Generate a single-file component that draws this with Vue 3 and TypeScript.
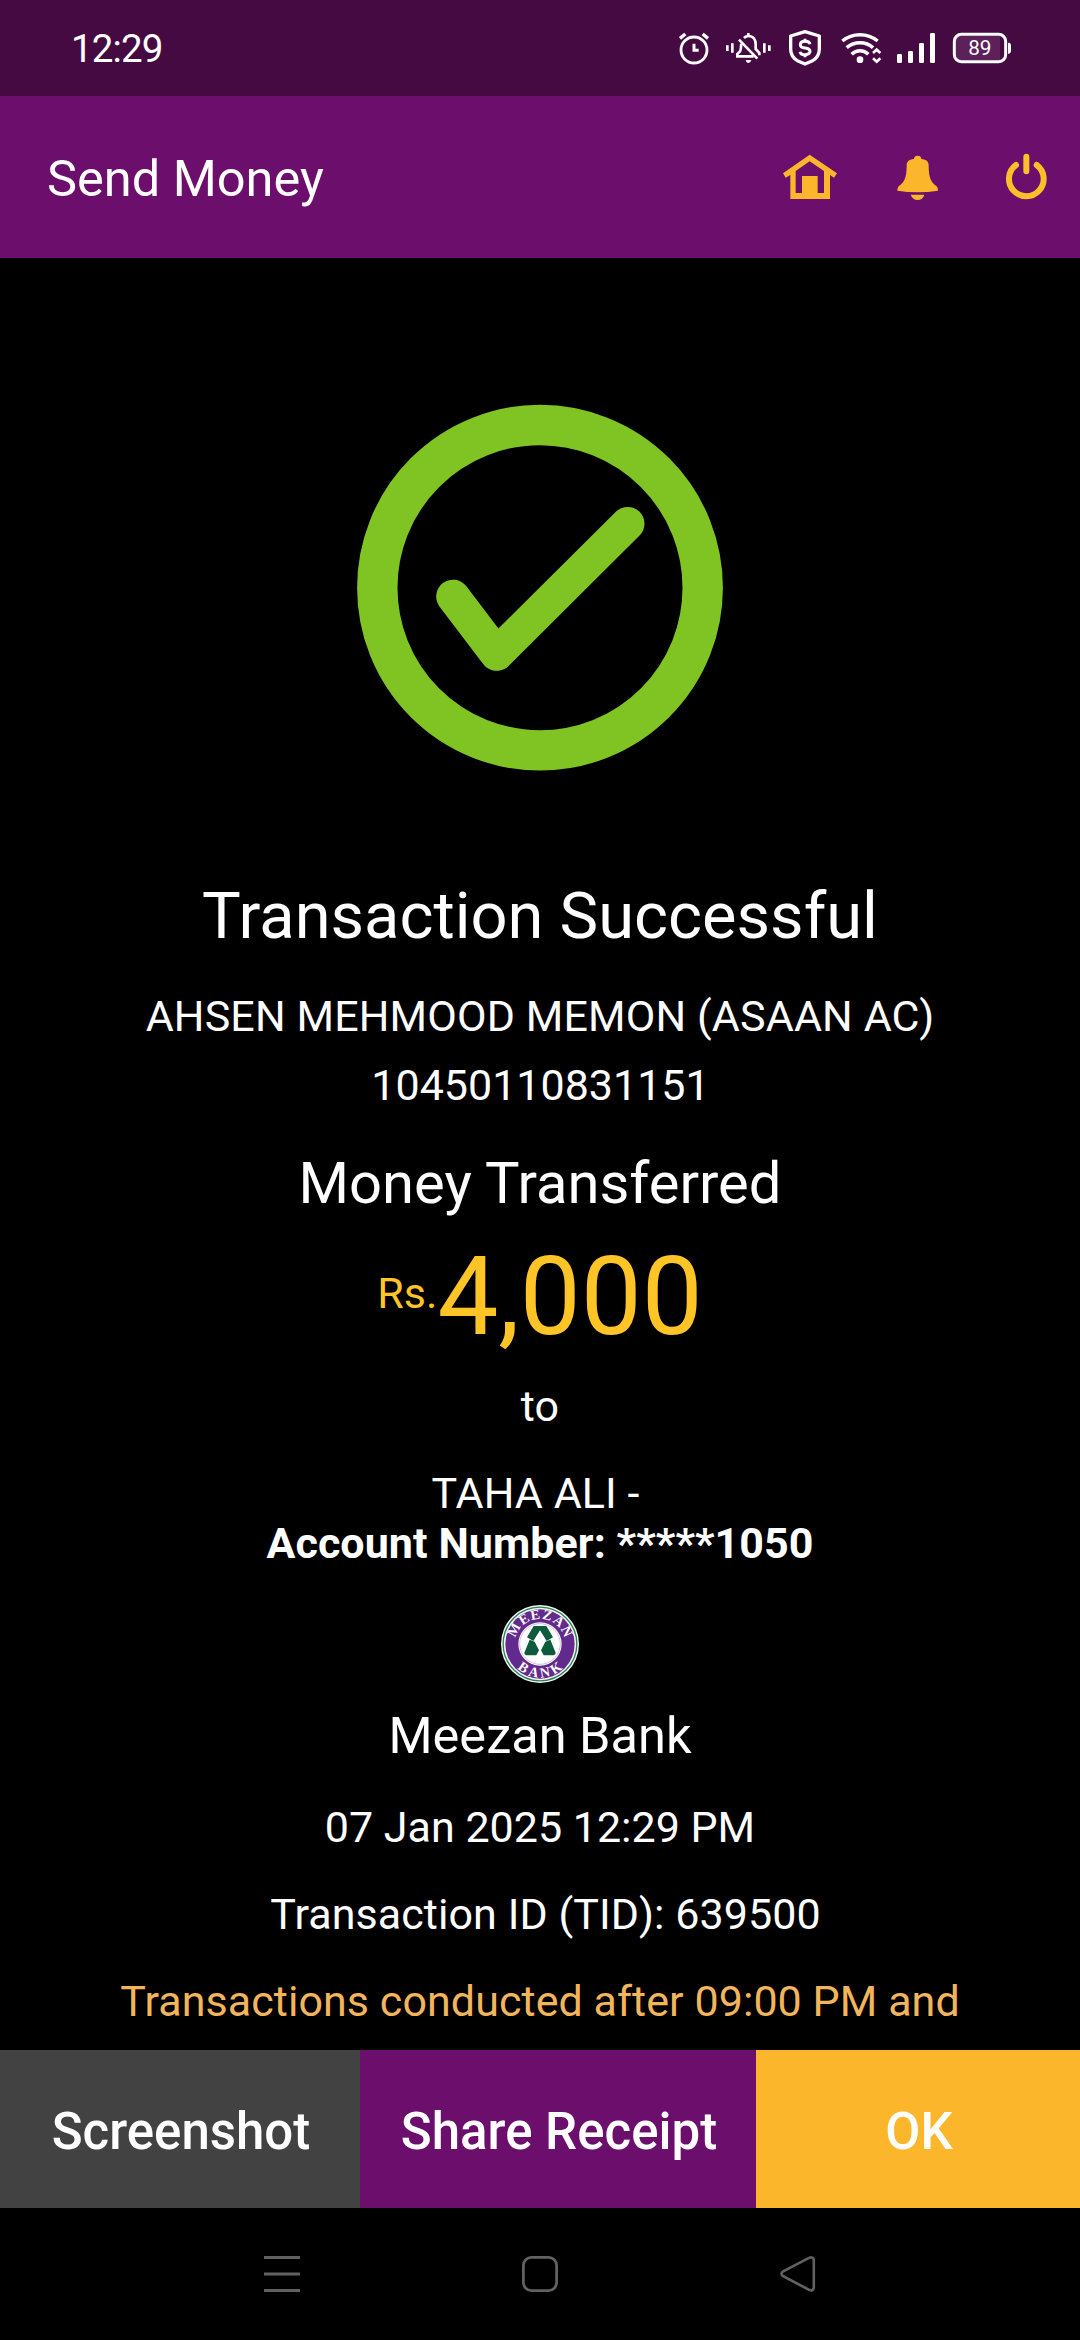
<script setup lang="ts">
interface Action {
  label: string
  tone: 'grey' | 'purple' | 'gold'
}

const receipt = {
  sender: 'AHSEN MEHMOOD MEMON (ASAAN AC)',
  senderAccount: '10450110831151',
  currency: 'Rs.',
  amount: '4,000',
  beneficiary: 'TAHA ALI -',
  beneficiaryAccount: 'Account Number: *****1050',
  bank: 'Meezan Bank',
  date: '07 Jan 2025 12:29 PM',
  tid: 'Transaction ID (TID): 639500',
  note: 'Transactions conducted after 09:00 PM and',
}

const actions: Action[] = [
  { label: 'Screenshot', tone: 'grey' },
  { label: 'Share Receipt', tone: 'purple' },
  { label: 'OK', tone: 'gold' },
]
</script>

<template>
  <div class="screen">
    <div class="status">
      <span class="clock">12:29</span>
      <div class="status-icons">
        <!-- alarm -->
        <svg width="30" height="37" viewBox="54 57 90 111" fill="none" stroke="#fff">
          <circle cx="102" cy="120" r="39" stroke-width="8.500" />
          <path d="M60 85L76 72M144 85L128 72" stroke-width="10" />
          <path d="M102 101v20h14" stroke-width="9" />
        </svg>
        <!-- muted bell with vibration -->
        <svg width="48" height="37" viewBox="192 57 144 111" fill="none" stroke="#fff" stroke-width="8">
          <path d="M202 106v17M217 100v28M313 100v28M328 106v17" />
          <path d="M252 84Q258 78 265 78C281 78 287 90 287 103V117L298 129V136" />
          <path d="M244 101C242 110 244 119 240 124L232 132V139H281" />
          <path d="M237 89L292 146" />
          <path d="M265 69v10" stroke-width="8" />
          <path d="M257 150h17q-2 9-8.500 9t-8.500-9z" fill="#fff" stroke="none" />
        </svg>
        <!-- shield -->
        <svg width="36" height="37" viewBox="384 57 108 111" fill="none" stroke="#fff" stroke-width="10" stroke-linejoin="round">
          <path d="M435 65L478 78V118C478 136 470 146 456 153L435 162L414 153C400 146 392 136 392 118V78Z" />
          <path d="M450 103C449 96 444 94 435 94C426 94 421 98 421 104C421 111 427 113 435 114C444 115 450 118 450 124C450 130 444 134 435 134C426 134 421 131 420 125M435 86v8M435 134v8" stroke-width="9" />
        </svg>
        <!-- wifi -->
        <svg width="40" height="37" viewBox="0 57 120 111" fill="none" stroke="#fff" stroke-width="10.500">
          <path d="M7 93Q30 74 60 74T113 93" />
          <path d="M20 113Q37 98 60 98Q83 98 99 113" />
          <path d="M35 133Q46 122 60 122Q74 122 85 133" />
          <circle cx="60" cy="149" r="10" fill="#fff" stroke="none" />
          <path d="M99 129L110 119L121 129M99 145L110 155L121 145" stroke-width="8" />
        </svg>
        <!-- signal -->
        <svg width="40" height="37" viewBox="168 57 120 111" fill="#fff">
          <rect x="171" y="132" width="15" height="27" rx="4" />
          <rect x="204" y="123" width="15" height="36" rx="4" />
          <rect x="237" y="99" width="15" height="60" rx="4" />
          <rect x="270" y="69" width="15" height="90" rx="4" />
        </svg>
        <!-- battery -->
        <svg width="60" height="37" viewBox="336 57 180 111">
          <rect x="348" y="78" width="132" height="72" fill="#5c2159" />
          <rect x="343" y="73" width="154" height="82" rx="21" fill="none" stroke="#fff" stroke-width="9" />
          <path d="M504 98h3q6 1 6 8v17q0 7-6 8h-3z" fill="#fff" />
          <text x="419.500" y="135" text-anchor="middle" class="battery-level">89</text>
        </svg>
      </div>
    </div>

    <header class="appbar">
      <h1>Send Money</h1>
      <div class="appbar-icons">
        <!-- home -->
        <svg width="54" height="50" viewBox="69 66 162 150" fill="#fcb62b">
          <path fill-rule="evenodd" d="M149 74L231 130L222 143L210 135V207H91V135L77 143L69 130ZM149 94L107 123V189H126V138H173V189H192V123Z" />
        </svg>
        <!-- notifications -->
        <svg width="47" height="50" viewBox="402 66 141 150" fill="#fcb62b">
          <path d="M462 87C462 80 467 77 473 77S484 80 484 87C500 88 506 96 506 107C506 146 515 157 529 168C533 172 534 177 534 182Q504 187 473 187T412 182C412 177 413 172 417 168C431 157 440 146 440 107C440 96 446 88 462 87Z" />
          <path d="M452 194H493Q488 210 473 210T452 194Z" />
        </svg>
        <!-- power -->
        <svg width="57" height="50" viewBox="714 66 171 150" fill="none" stroke="#fdbf27" stroke-width="18" stroke-linecap="round">
          <path d="M768 105A52 52 0 1 0 830 105M799 80V124" />
        </svg>
      </div>
    </header>

    <main class="receipt">
      <svg class="tick" width="366" height="366" viewBox="0 0 366 366" fill="none" stroke="#80c424">
        <circle cx="183" cy="182.700" r="162.700" stroke-width="40.400" />
        <path d="M96 191.500L139.700 249L270.700 118.700" stroke-width="33.600" stroke-linecap="round" stroke-linejoin="round" />
      </svg>
      <h2 class="title">Transaction Successful</h2>
      <p class="line sender">{{ receipt.sender }}</p>
      <p class="line sender-account">{{ receipt.senderAccount }}</p>
      <p class="transferred">Money Transferred</p>
      <p class="amount"><span class="currency">{{ receipt.currency }}</span>{{ receipt.amount }}</p>
      <p class="line to">to</p>
      <p class="line beneficiary">{{ receipt.beneficiary }}</p>
      <p class="line account">{{ receipt.beneficiaryAccount }}</p>
      <svg class="logo" width="78" height="78" viewBox="0 0 234 234">
        <defs>
          <path id="arc-top" d="M42 117A75 75 0 0 1 192 117" />
          <path id="arc-bottom" d="M17 117A100 100 0 0 0 217 117" />
        </defs>
        <circle cx="117" cy="117" r="117" fill="#f1f5f1" />
        <circle cx="117" cy="117" r="110.500" fill="none" stroke="#2c7f58" stroke-width="4" />
        <circle cx="117" cy="117" r="104" fill="#622a8c" />
        <circle cx="117" cy="117" r="65" fill="#fff" />
        <circle cx="117" cy="117" r="61" fill="none" stroke="#b7a3c9" stroke-width="2" />
        <g fill="#0e5a3c">
          <path d="M98 63H136L156 97L137 108L117 76L97 108L78 97Z" />
          <path d="M86 104L101 110L114 136L106 151H76Q70 149 70 143Z" />
          <path d="M148 104L133 110L120 136L128 151H158Q164 149 164 143Z" />
        </g>
        <text class="logo-text"><textPath href="#arc-top" startOffset="50%" text-anchor="middle" textLength="200">MEEZAN</textPath></text>
        <text class="logo-text"><textPath href="#arc-bottom" startOffset="50%" text-anchor="middle" textLength="150">BANK</textPath></text>
      </svg>
      <p class="bank">{{ receipt.bank }}</p>
      <p class="line date">{{ receipt.date }}</p>
      <p class="line tid">{{ receipt.tid }}</p>
      <p class="line note">{{ receipt.note }}</p>
    </main>

    <div class="actions">
      <button v-for="a in actions" :key="a.label" type="button" :class="a.tone">{{ a.label }}</button>
    </div>

    <nav class="navbar">
      <svg width="36" height="36" viewBox="0 0 36 36" stroke="#616161" stroke-width="3">
        <path d="M0 1.500H36M0 18H36M0 34.500H36" />
      </svg>
      <svg width="36" height="36" viewBox="0 0 36 36" fill="none" stroke="#616161" stroke-width="2.800">
        <rect x="1.400" y="1.400" width="33.200" height="33.200" rx="8" />
      </svg>
      <svg width="36" height="36" viewBox="0 0 36 36" fill="none" stroke="#616161" stroke-width="2.600">
        <path d="M2.700 15.700L29 1.900Q33.300 0.200 33.800 4V31.500Q33.300 35.800 29 33.800L2.700 19.900Q0.300 17.800 2.700 15.700Z" />
      </svg>
    </nav>
  </div>
</template>

<style>
body {
  margin: 0;
  background: #000;
}
</style>

<style scoped>
.screen {
  width: 1080px;
  height: 2340px;
  display: flex;
  flex-direction: column;
  overflow: hidden;
  background: #000;
  color: #fff;
  font-family: Roboto, "Liberation Sans", sans-serif;
}
h1, h2, p {
  margin: 0;
  font-weight: 400;
  white-space: pre;
}
svg {
  display: block;
  flex: none;
  overflow: visible;
}
.status {
  height: 96px;
  flex: none;
  display: flex;
  justify-content: space-between;
  align-items: flex-start;
  box-sizing: border-box;
  padding: 0 68px 0 71px;
  background: #450a42;
}
.clock {
  font-size: 38.5px;
  line-height: 97px;
  letter-spacing: -0.9px;
}
.status-icons {
  display: flex;
  gap: 16px;
  padding-top: 29px;
}
.battery-level {
  font-size: 62px;
  fill: #fff;
}
.appbar {
  height: 162px;
  flex: none;
  display: flex;
  justify-content: space-between;
  align-items: center;
  box-sizing: border-box;
  padding: 0 25px 0 47px;
  background: #6c0f6c;
}
.appbar h1 {
  font-size: 50.5px;
  line-height: 60px;
  padding-top: 4px;
}
.appbar-icons {
  display: flex;
  gap: 57px;
}
.receipt {
  height: 1792px;
  flex: none;
  display: flex;
  flex-direction: column;
  align-items: center;
  overflow: hidden;
}
.receipt > * {
  flex: none;
}
.tick {
  margin-top: 147px;
}
.title {
  margin-top: 106px;
  font-size: 65px;
  line-height: 78px;
}
.line {
  font-size: 43px;
  line-height: 50px;
  letter-spacing: 0.07px;
}
.sender {
  margin-top: 36px;
  letter-spacing: 0.13px;
}
.sender-account {
  margin-top: 19px;
  padding-left: 1px;
  letter-spacing: 0;
}
.transferred {
  margin-top: 39px;
  font-size: 57.9px;
  line-height: 68px;
}
.amount {
  display: flex;
  margin-top: 16px;
  font-size: 108.5px;
  line-height: 128px;
  color: #ffc425;
}
.currency {
  font-size: 43px;
  line-height: 120px;
}
.to {
  margin-top: 20px;
}
.beneficiary {
  margin-top: 37px;
  padding-right: 9px;
}
.account {
  font-weight: 700;
}
.logo {
  margin-top: 37px;
}
.logo-text {
  font-family: "Liberation Serif", serif;
  font-weight: 700;
  font-size: 42px;
  fill: #fff;
}
.bank {
  margin-top: 23px;
  font-size: 50.5px;
  line-height: 60px;
}
.date {
  margin-top: 36px;
  letter-spacing: 0;
}
.tid {
  margin-top: 37px;
  padding-left: 11px;
}
.note {
  margin-top: 37px;
  color: #f2b55c;
}
.actions {
  height: 158px;
  flex: none;
  display: grid;
  grid-template-columns: 360px 396px 324px;
}
.actions button {
  border: 0;
  padding: 5px 0 0 2px;
  color: #fff;
  font: 500 51px Roboto, "Liberation Sans", sans-serif;
}
.grey {
  background: #424242;
}
.purple {
  background: #6c0f6c;
}
.gold {
  background: #fcb62b;
}
.navbar {
  flex: 1;
  display: flex;
  justify-content: space-between;
  align-items: flex-start;
  padding: 48px 264px 0;
}
</style>
